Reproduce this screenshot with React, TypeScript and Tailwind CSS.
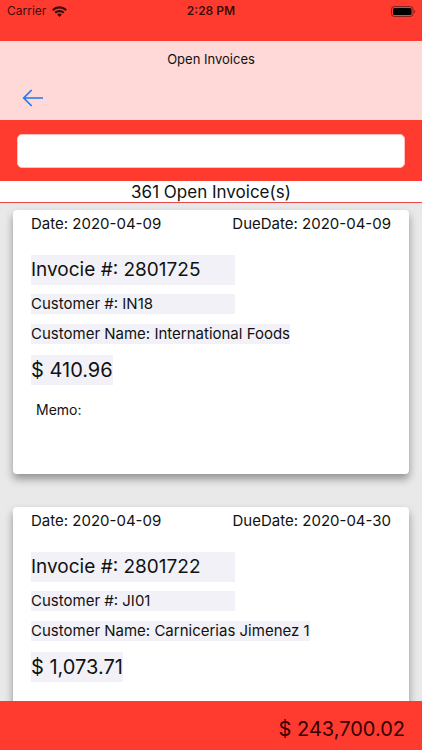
type Invoice = {
  id: string;
  date: string;
  due: string;
  customer: string;
  name: string;
  amount: string;
  memo?: string;
};

const invoices: Invoice[] = [
  { id: "2801725", date: "2020-04-09", due: "2020-04-09", customer: "IN18", name: "International Foods", amount: "410.96", memo: "" },
  { id: "2801722", date: "2020-04-09", due: "2020-04-30", customer: "JI01", name: "Carnicerias Jimenez 1", amount: "1,073.71" },
];

function WifiIcon() {
  return (
    <svg className="h-[11px] w-[15px]" viewBox="0 0 15 11" fill="none" stroke="currentColor" strokeWidth="2.2" aria-hidden="true">
      <path d="M0.8 4.1a9.6 9.6 0 0 1 13.4 0" />
      <path d="M3.2 6.8a6.1 6.1 0 0 1 8.6 0" />
      <path d="M7.5 11 5.1 8.6a3.4 3.4 0 0 1 4.8 0Z" fill="currentColor" stroke="none" />
    </svg>
  );
}

function BatteryIcon() {
  return (
    <svg className="h-[11px] w-[25px]" viewBox="0 0 25 11" aria-hidden="true">
      <rect x="0.5" y="0.5" width="21.5" height="10" rx="2.8" fill="none" stroke="#000" strokeOpacity="0.45" />
      <rect x="2" y="2" width="18.5" height="7" rx="1.5" fill="#000" />
      <path d="M23.2 3.8c1.4.5 1.4 2.9 0 3.4Z" fill="#000" fillOpacity="0.5" />
    </svg>
  );
}

function StatusBar() {
  return (
    <div className="grid h-[41px] shrink-0 grid-cols-3 items-start px-1.5 pt-[3px] text-xs leading-4 text-black/80">
      <div className="flex items-center gap-1.5 pl-px">
        <span>Carrier</span>
        <WifiIcon />
      </div>
      <span className="text-center font-semibold">2:28 PM</span>
      <div className="flex h-4 items-center justify-end">
        <BatteryIcon />
      </div>
    </div>
  );
}

function InvoiceCard({ invoice }: { invoice: Invoice }) {
  return (
    <article className="flex h-[264px] shrink-0 flex-col items-start rounded bg-white px-[18px] pt-1 shadow-[0_5px_9px_rgba(0,0,0,0.38)]">
      <div className="flex w-full justify-between text-[15px] leading-5">
        <span>Date: {invoice.date}</span>
        <span>DueDate: {invoice.due}</span>
      </div>
      <h2 className="mt-[21px] w-[204px] bg-[#f2f1f8] text-[19px] leading-[30px]">Invocie #: {invoice.id}</h2>
      <p className="mt-[9px] w-[204px] bg-[#f2f1f8] text-[15px] leading-5">Customer #: {invoice.customer}</p>
      <p className="mt-[10px] bg-[#f2f1f8] text-[15px] leading-5">Customer Name: {invoice.name}</p>
      <p className="mt-[11px] bg-[#f2f1f8] text-xl leading-[30px]">$ {invoice.amount}</p>
      {invoice.memo !== undefined && <p className="mt-[15px] pl-[5px] text-sm leading-5">Memo: {invoice.memo}</p>}
    </article>
  );
}

export default function App() {
  return (
    <div className="flex h-screen flex-col overflow-hidden bg-[#ff3b30] font-['Inter','Liberation_Sans',sans-serif] text-[#111]">
      <StatusBar />
      <header className="h-[79px] shrink-0 bg-[#ffd8d8] px-[22px] pt-2">
        <h1 className="text-center text-[13px] leading-5">Open Invoices</h1>
        <button type="button" aria-label="Back" className="mt-5 block text-[#1b7bf0]">
          <svg className="h-[18px] w-[22px]" viewBox="0 0 22 18" fill="none" stroke="currentColor" strokeWidth="1.7" aria-hidden="true">
            <path d="M21 9H1.5M9.7 1 1.7 9l8 8" />
          </svg>
        </button>
      </header>
      <div className="h-[61px] shrink-0 px-[17px] pt-[14px]">
        <input
          type="search"
          aria-label="Search invoices"
          className="block h-[34px] w-full rounded-[5px] border border-[#ffc0bc] bg-white px-2 text-[15px] outline-none"
        />
      </div>
      <p className="h-[22px] shrink-0 border-b border-[#e8474a] bg-white text-center text-[17px] leading-[22px]">361 Open Invoice(s)</p>
      <main className="flex min-h-0 flex-1 flex-col gap-[33px] overflow-y-auto bg-[#e9e9e9] px-[13px] pt-[7px] [scrollbar-width:none]">
        {invoices.map((invoice) => (
          <InvoiceCard key={invoice.id} invoice={invoice} />
        ))}
      </main>
      <footer className="h-[49px] shrink-0 px-[17px] pt-[13px] text-right text-xl leading-[30px] text-[#300]">$ 243,700.02</footer>
    </div>
  );
}
